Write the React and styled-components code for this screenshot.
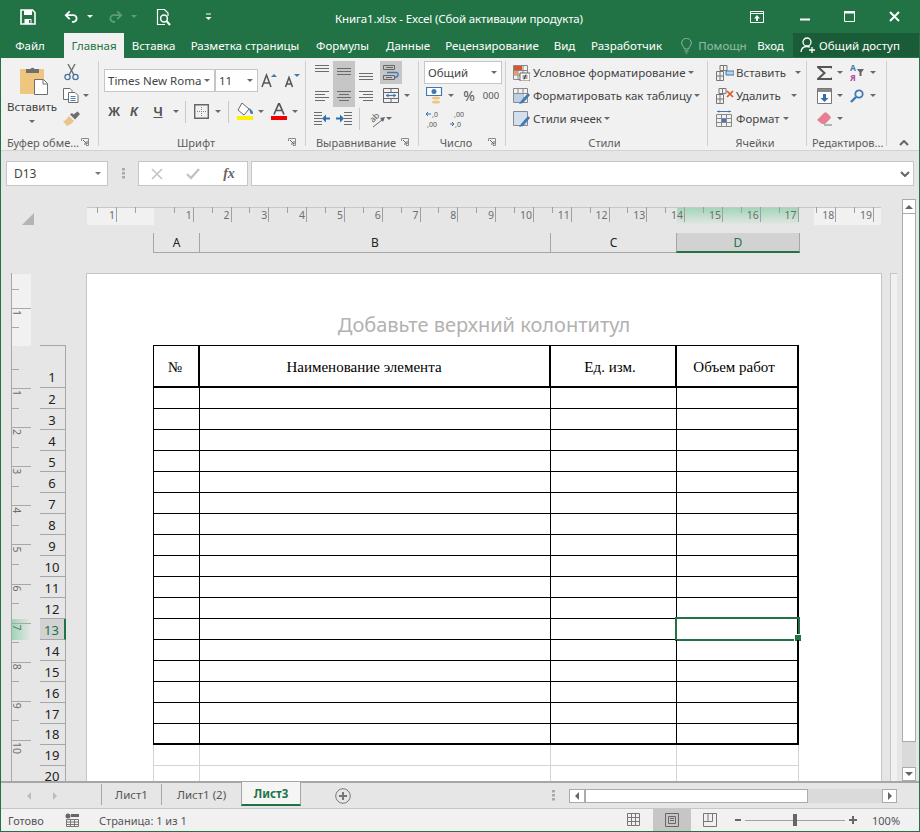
import React from 'react';
import styled, { createGlobalStyle } from 'styled-components';

const green = '#217346';

const GlobalStyle = createGlobalStyle`
  html, body { margin: 0; padding: 0; }
  body { font-family: "Noto Sans", "Liberation Sans", sans-serif; font-size: 12px; color: #444; }
  * { box-sizing: border-box; }
`;

const Window = styled.div`
  width: 920px;
  height: 832px;
  display: flex;
  flex-direction: column;
  border: 1px solid ${green};
  border-top: 0;
  overflow: hidden;
  background: #e6e6e6;
`;

/* title bar */
const TitleBar = styled.div`
  height: 33px;
  flex: none;
  display: flex;
  align-items: center;
  background: ${green};
  color: #fff;
`;
const Qat = styled.div`
  width: 334px;
  display: flex;
  align-items: center;
  padding-left: 19px;
`;
const QatSlot = styled.div`
  width: ${p => p.$w}px;
  display: flex;
  align-items: center;
`;
const Title = styled.div`
  flex: 1;
  font-size: 11.5px;
  letter-spacing: -0.15px;
  padding-top: 4px;
  white-space: nowrap;
`;
const WinControls = styled.div`
  display: flex;
  align-items: center;
  padding-right: 2px;
`;
const WinButton = styled.div`
  width: 45px;
  display: flex;
  justify-content: center;
  padding-right: ${p => p.$pr || 0}px;
`;

/* tabs */
const TabRow = styled.div`
  height: 25px;
  flex: none;
  display: flex;
  background: ${green};
  color: #fff;
`;
const Tab = styled.div`
  width: ${p => p.$w}px;
  flex: none;
  margin-left: ${p => p.$ml || 0}px;
  display: flex;
  align-items: center;
  justify-content: center;
  white-space: nowrap;
  font-size: 11.5px;
  background: ${p => (p.$active ? '#f1f1f1' : 'transparent')};
  color: ${p => (p.$active ? green : '#fff')};
  opacity: ${p => (p.$muted ? 0.5 : 1)};
`;
const Share = styled.div`
  width: 126px;
  flex: none;
  margin-left: 3px;
  height: 24px;
  display: flex;
  align-items: center;
  gap: 3px;
  padding-left: 7px;
  font-size: 11.5px;
  background: #1a5c38;
`;

/* ribbon */
const Ribbon = styled.div`
  height: 93px;
  flex: none;
  display: flex;
  background: #f1f1f1;
  border-bottom: 1px solid #d2d2d2;
  padding: 3px 0 4px;
`;
const Group = styled.div`
  width: ${p => p.$w}px;
  flex: none;
  display: flex;
  flex-direction: column;
  border-right: 1px solid #d0d0d0;
  margin-right: 1px;
`;
const GroupBody = styled.div`
  flex: 1;
  min-height: 0;
  display: flex;
  flex-direction: ${p => (p.$row ? 'row' : 'column')};
  padding-left: ${p => p.$pl || 0}px;
  padding-top: ${p => p.$pt || 0}px;
  gap: ${p => p.$gap || 0}px;
`;
const GroupFooter = styled.div`
  height: 18px;
  margin-bottom: -5px;
  flex: none;
  display: flex;
  align-items: center;
  padding: 0 9px 0 4px;
`;
const GroupLabel = styled.div`
  flex: 1;
  text-align: center;
  font-size: 11px;
  color: #5c5c5c;
  white-space: nowrap;
`;
const Row = styled.div`
  height: ${p => p.$h || 23}px;
  flex: none;
  display: flex;
  align-items: center;
  white-space: nowrap;
`;
const Slot = styled.div`
  width: ${p => p.$w}px;
  height: ${p => p.$h || 23}px;
  flex: none;
  display: flex;
  align-items: center;
  justify-content: center;
  margin-left: ${p => p.$ml || 0}px;
  background: ${p => (p.$active ? '#c6c6c6' : 'transparent')};
`;
const Caret = styled.span`
  flex: none;
  width: 0;
  height: 0;
  margin-left: ${p => p.$ml || 0}px;
  border-left: 3px solid transparent;
  border-right: 3px solid transparent;
  border-top: 3px solid ${p => p.$color || '#6a6a6a'};
`;
const Divider = styled.div`
  width: 1px;
  height: 22px;
  flex: none;
  margin: 0 ${p => p.$m || 6}px;
  background: #c8c8c8;
`;
const Paste = styled.div`
  width: 58px;
  flex: none;
  display: flex;
  flex-direction: column;
  align-items: center;
  padding: 5px 0 0 4px;
  font-size: 11.5px;
  color: #3f3f3f;
  svg { margin-left: 4px; }
`;
const PasteText = styled.div`
  margin: 3px 0 5px;
  line-height: 16px;
`;
const ClipColumn = styled.div`
  display: flex;
  flex-direction: column;
`;
const Select = styled.div`
  width: ${p => p.$w}px;
  height: 23px;
  flex: none;
  display: flex;
  align-items: center;
  justify-content: space-between;
  padding: 0 4px 0 3px;
  background: #fff;
  border: 1px solid #c6c6c6;
  color: #444;
  font-size: 11.5px;
  white-space: nowrap;
  overflow: hidden;
`;
const StyleText = styled.span`
  font-size: 11.5px;
  color: #444;
  margin-left: ${p => p.$ml || 3}px;
`;
const Percent = styled.span`
  font-size: 14px;
  color: #555;
`;
const Thousands = styled.span`
  font-size: 9.5px;
  color: #555;
`;
const StyleRow = styled(Row)`
  padding-left: ${p => p.$pl || 5}px;
`;
const Collapse = styled.div`
  width: 31px;
  flex: none;
  display: flex;
  align-items: flex-end;
  justify-content: center;
`;
const BoldGlyph = styled.span`
  font-family: "Liberation Sans", sans-serif;
  font-size: 13px;
  font-weight: 700;
  font-style: ${p => (p.$italic ? 'italic' : 'normal')};
  text-decoration: ${p => (p.$under ? 'underline' : 'none')};
  color: #555;
`;

/* formula bar */
const FormulaBar = styled.div`
  height: 35px;
  flex: none;
  display: flex;
  align-items: flex-end;
  padding: 0 5px;
`;
const NameBox = styled.div`
  width: 102px;
  height: 25px;
  display: flex;
  align-items: center;
  justify-content: space-between;
  padding: 0 6px 0 7px;
  background: #fff;
  border: 1px solid #c6c6c6;
  color: #444;
`;
const Grip = styled.div`
  width: 30px;
  height: 25px;
  display: flex;
  align-items: center;
  justify-content: center;
`;
const FxButtons = styled.div`
  width: 110px;
  height: 25px;
  display: grid;
  grid-template-columns: 36px 36px 36px;
  align-items: center;
  justify-items: center;
  background: #fff;
  border: 1px solid #c6c6c6;
`;
const FxGlyph = styled.span`
  font-family: "Liberation Serif", serif;
  font-style: italic;
  font-weight: 700;
  font-size: 14px;
  color: #666;
`;
const FxInput = styled.div`
  width: 663px;
  height: 25px;
  margin-left: 3px;
  display: flex;
  align-items: center;
  justify-content: flex-end;
  padding-right: 3px;
  background: #fff;
  border: 1px solid #c6c6c6;
`;

/* sheet */
const SheetArea = styled.div`
  flex: 1;
  min-height: 0;
  display: flex;
`;
const SheetMain = styled.div`
  width: 901px;
  flex: none;
  display: flex;
  flex-direction: column;
`;
const RulerRow = styled.div`
  margin-top: 21px;
  height: 18px;
  display: flex;
`;
const Corner = styled.div`
  width: 86px;
  height: 18px;
  flex: none;
  display: flex;
  align-items: flex-end;
  padding-left: 21px;
`;
const ColumnHeads = styled.div`
  margin-top: 8px;
  height: 20px;
  display: flex;
  padding-left: 152px;
`;
const ColumnHead = styled.div`
  width: ${p => p.$w}px;
  display: flex;
  align-items: center;
  justify-content: center;
  border-left: 1px solid #a6a6a6;
  border-bottom: ${p => (p.$active ? `2px solid ${green}` : '1px solid #a6a6a6')};
  border-right: ${p => (p.$active ? '1px solid #a6a6a6' : '0')};
  background: ${p => (p.$active ? '#d2d2d2' : 'transparent')};
  color: ${p => (p.$active ? green : '#222')};
  font-size: 12px;
`;
const PageRow = styled.div`
  flex: 1;
  min-height: 0;
  margin-top: 20px;
  padding-left: 10px;
  display: flex;
  overflow: hidden;
`;
const RowHeads = styled.div`
  width: 26px;
  margin-left: 9px;
  margin-right: 20px;
  padding-top: 72px;
  flex: none;
`;
const RowHead = styled.div`
  height: ${p => p.$h}px;
  display: flex;
  align-items: ${p => (p.$tall ? 'flex-end' : 'center')};
  justify-content: center;
  padding-top: ${p => (p.$tall || p.$n >= 18 ? 0 : 2)}px;
  padding-bottom: ${p => (p.$tall || p.$n === 20 ? 1 : 0)}px;
  padding-right: 1px;
  font-size: 13px;
  line-height: 18px;
  color: ${p => (p.$active ? green : '#222')};
  background: ${p => (p.$active ? '#d2d2d2' : 'transparent')};
  border-top: ${p => (p.$tall ? '1px solid #a6a6a6' : '0')};
  border-right: ${p => (p.$active ? `2px solid ${green}` : '1px solid #a6a6a6')};
  border-bottom: 1px solid #a6a6a6;
`;
const Page = styled.div`
  width: 796px;
  flex: none;
  background: #fff;
  border: 1px solid #c6c6c6;
  border-bottom: 0;
`;
const HeaderZone = styled.div`
  height: 71px;
  padding-top: 37px;
  text-align: center;
  font-size: 20px;
  line-height: 28px;
  color: #b2b2b2;
`;
const Sheet = styled.div`
  margin-left: 66px;
  width: 646px;
`;
const Rule = styled.div`
  height: 1px;
  background: #000;
`;
const TableRow = styled.div`
  height: ${p => p.$h}px;
  display: grid;
  grid-template-columns: 46px 351px 126px 122px;
  border-left: 1px solid ${p => p.$line};
`;
const Cell = styled.div`
  position: relative;
  display: flex;
  align-items: center;
  justify-content: center;
  padding: 3px ${p => p.$pr || 0}px 0 0;
  font-family: "Liberation Serif", serif;
  font-size: 15px;
  color: #000;
  border-right: ${p => p.$rw || 1}px solid ${p => p.$line};
  border-bottom: ${p => p.$bw || 1}px solid ${p => p.$line};
`;
const Selection = styled.div`
  position: absolute;
  top: -2px;
  left: -2px;
  right: -3px;
  bottom: -2px;
  border: 2px solid ${green};
`;
const FillHandle = styled.div`
  position: absolute;
  right: -3px;
  bottom: -3px;
  width: 6px;
  height: 6px;
  background: ${green};
  border: 1px solid #fff;
  border-right: 0;
  box-sizing: content-box;
`;
const NextPage = styled.div`
  width: 7px;
  margin-left: 8px;
  flex: none;
  background: #f1f1f1;
  border-left: 1px solid #c6c6c6;
  border-top: 1px solid #c6c6c6;
`;

/* scrollbars */
const VScroll = styled.div`
  width: 14px;
  flex: none;
  margin-top: 13px;
  display: flex;
  flex-direction: column;
  background: #dadada;
`;
const ScrollBtn = styled.div`
  width: ${p => p.$w || 14}px;
  height: ${p => p.$h || 14}px;
  flex: none;
  display: flex;
  align-items: center;
  justify-content: center;
  background: #fff;
  border: 1px solid #ababab;
`;
const VThumb = styled.div`
  height: 528px;
  flex: none;
  background: #fff;
  border: 1px solid #ababab;
  border-top: 0;
`;
const VTrack = styled.div`
  flex: 1;
`;
const HScroll = styled.div`
  width: 328px;
  height: 14px;
  display: flex;
  background: #dadada;
`;
const HThumb = styled.div`
  width: 223px;
  flex: none;
  background: #fff;
  border: 1px solid #ababab;
`;
const HTrack = styled.div`
  flex: 1;
`;

/* sheet tabs */
const TabBar = styled.div`
  height: 28px;
  flex: none;
  display: flex;
  align-items: stretch;
  border-top: 2px solid #a6a6a6;
  border-bottom: 1px solid #c6c6c6;
  background: #e6e6e6;
`;
const NavArrows = styled.div`
  width: 100px;
  flex: none;
  display: flex;
  align-items: center;
  padding-left: 26px;
  gap: 22px;
`;
const SheetTab = styled.div`
  width: ${p => p.$w}px;
  height: ${p => (p.$active ? '24px' : '21px')};
  flex: none;
  display: flex;
  align-items: center;
  justify-content: center;
  margin-top: ${p => (p.$active ? '-1px' : '1px')};
  font-size: 11.5px;
  color: ${p => (p.$active ? green : '#555')};
  font-weight: ${p => (p.$active ? 700 : 400)};
  background: ${p => (p.$active ? '#f5f5f5' : 'transparent')};
  border-left: 1px solid #a6a6a6;
  border-right: ${p => (p.$active ? '1px solid #a6a6a6' : '0')};
  border-bottom: ${p => (p.$active ? `2px solid ${green}` : '0')};
`;
const AddSheet = styled.div`
  width: 83px;
  flex: none;
  display: flex;
  align-items: center;
  padding-left: 34px;
`;
const TabGrip = styled.div`
  width: 185px;
  flex: none;
  display: flex;
  align-items: center;
  padding-left: 168px;
`;
const HScrollWrap = styled.div`
  display: flex;
  align-items: center;
`;

/* status bar */
const StatusBar = styled.div`
  height: 22px;
  flex: none;
  display: flex;
  align-items: center;
  background: #f1f1f1;
  color: #555;
  font-size: 11px;
`;
const StatusText = styled.div`
  width: ${p => p.$w}px;
  flex: none;
  padding-left: ${p => p.$pl || 0}px;
  white-space: nowrap;
`;
const ViewButton = styled.div`
  width: ${p => p.$w}px;
  height: 22px;
  flex: none;
  display: flex;
  align-items: center;
  justify-content: center;
  background: ${p => (p.$active ? '#c6c6c6' : 'transparent')};
`;
const ZoomBar = styled.div`
  margin-left: 6px;
  display: flex;
  align-items: center;
`;
const ZoomTrack = styled.div`
  width: 100px;
  height: 1px;
  margin: 0 4px;
  background: #a0a0a0;
  display: flex;
  justify-content: center;
  align-items: center;
`;
const ZoomThumb = styled.div`
  width: 4px;
  height: 12px;
  flex: none;
  background: #666;
`;
const ZoomPct = styled.div`
  margin-left: 15px;
  color: #555;
`;

/* icons */
const Svg = ({ w, h, children }) => (
  <svg width={w} height={h} viewBox={`0 0 ${w} ${h}`} fill="none">
    {children}
  </svg>
);

const SaveIcon = () => (
  <Svg w={16} h={16}>
    <path d="M1 1h11.500L15 3.500V15H1z" stroke="#fff" strokeWidth="1.600" />
    <path d="M4 1h8v5H4zM4.500 10h7v5h-7z" fill="#fff" />
    <path d="M9 11h1.500v3H9z" fill={green} />
  </Svg>
);
const UndoIcon = ({ color = '#fff', flip }) => (
  <svg width="15" height="14" viewBox="0 0 17 15" fill="none" style={flip ? { transform: 'scaleX(-1)' } : undefined}>
    <path d="M6.500 1 2 5.500 6.500 10" stroke={color} strokeWidth="2" />
    <path d="M3 5.500h7.500a3.800 3.800 0 0 1 0 7.600H9" stroke={color} strokeWidth="2" />
  </svg>
);
const PreviewIcon = () => (
  <Svg w={15} h={18}>
    <path d="M9 16.500H1.500v-15h7l3.500 3.500v3" stroke="#fff" strokeWidth="1.200" />
    <circle cx="8" cy="10.500" r="3.400" stroke="#fff" strokeWidth="1.500" />
    <path d="m10.500 13 3.500 4" stroke="#fff" strokeWidth="2" />
  </Svg>
);
const CustomizeIcon = () => (
  <Svg w={7} h={8}>
    <path d="M1 1h5" stroke="#fff" />
    <path d="M0.500 4h6L3.500 7z" fill="#fff" />
  </Svg>
);
const RibbonModeIcon = () => (
  <Svg w={14} h={12}>
    <path d="M.500.500h13v11H.500zM.500 2.500h13" stroke="#fff" />
    <path d="M7 4 4 7.500h2V10h2V7.500h2z" fill="#fff" />
  </Svg>
);
const MinIcon = () => (
  <Svg w={10} h={10}>
    <path d="M0 7.500h10" stroke="#fff" strokeWidth="2" />
  </Svg>
);
const MaxIcon = () => (
  <Svg w={11} h={11}>
    <path d="M.500 1.500h10v9H.500z" stroke="#fff" />
    <path d="M0 0h11v2.500H0z" fill="#fff" />
  </Svg>
);
const CloseIcon = () => (
  <Svg w={11} h={11}>
    <path d="m1 1 9 9M10 1l-9 9" stroke="#fff" strokeWidth="2" />
  </Svg>
);
const BulbIcon = () => (
  <Svg w={11} h={16}>
    <path d="M3.500 11C3 8.500.7 7.800.7 5a4.800 4.800 0 0 1 9.600 0c0 2.800-2.300 3.500-2.800 6z" stroke="#8db9a2" />
    <path d="M3.500 13h4M4.500 15h2" stroke="#8db9a2" />
  </Svg>
);
const PersonIcon = () => (
  <Svg w={16} h={16}>
    <circle cx="7" cy="5" r="4" stroke="#fff" strokeWidth="1.300" />
    <path d="M1 15c.3-3.500 2.500-5.500 6-5.500 1 0 2 .2 2.800.6" stroke="#fff" strokeWidth="1.300" />
    <path d="M12 10v6M9 13h6" stroke="#fff" strokeWidth="1.300" />
  </Svg>
);
const PasteIcon = () => (
  <Svg w={29} h={30}>
    <rect x="0" y="3" width="24" height="25" rx="1" fill="#eec680" />
    <path d="M6 7V3h4.500a2.300 2.300 0 0 1 4 0H19v4z" fill="#6f6f6f" />
    <path d="M14.500 13.500h9l4 4v11h-13z" fill="#fff" stroke="#6f6f6f" />
    <path d="M23 13.500v4.500h4.500" stroke="#6f6f6f" />
  </Svg>
);
const CutIcon = () => (
  <Svg w={15} h={17}>
    <path d="M4 0l6 11M11 0 5 11" stroke="#6e6e6e" strokeWidth="1.400" />
    <circle cx="3.500" cy="13" r="2.600" stroke="#44739e" strokeWidth="1.300" />
    <circle cx="11.500" cy="13" r="2.600" stroke="#44739e" strokeWidth="1.300" />
  </Svg>
);
const CopyIcon = () => (
  <Svg w={16} h={15}>
    <path d="M.500.500H7l2 2v9H.500z" fill="#fff" stroke="#6e6e6e" />
    <path d="M5.500 4.500H12l3 3v7H5.500z" fill="#fff" stroke="#6e6e6e" />
    <path d="M7.500 8.500h5M7.500 10.500h5M7.500 12.500h5" stroke="#4a7fb0" />
  </Svg>
);
const BrushIcon = () => (
  <Svg w={17} h={15}>
    <path d="M0 10c3 0 4-3 6-5l5 5c-2 2-4 4-7 5z" fill="#e7c48b" />
    <path d="m7 3.500 5 5 1.500-1.500L17 3l-2.500-2.500-4 3L9 2z" fill="#6e6e6e" />
  </Svg>
);
const Launcher = () => (
  <Svg w={8} h={8}>
    <path d="M.500 3V.500H7.500V7.500H5" stroke="#8a8a8a" />
    <path d="m2 2 4 4M6 3v3H3" stroke="#6a6a6a" />
  </Svg>
);
const GrowFont = ({ down }) => (
  <Svg w={16} h={15}>
    <path d={down ? 'M1.500 14 5 4.500 8.500 14M3 11h4' : 'M1 14 5.500 2 10 14M3 10h5'} stroke="#555" strokeWidth="1.500" />
    <path d={down ? 'M10 1h6l-3 3z' : 'M10 4l3-3 3 3z'} fill="#3e79b4" />
  </Svg>
);
const BordersIcon = () => (
  <Svg w={15} h={15}>
    <path d="M.700.700h13.600v13.600H.700z" stroke="#666" strokeWidth="1.400" />
    <path d="M7.500 3v9M3 7.500h9" stroke="#888" strokeDasharray="1 1" />
  </Svg>
);
const FillIcon = () => (
  <Svg w={18} h={18}>
    <path d="m6 0 7 6-5 6-6-5z" fill="#fff" stroke="#666" />
    <path d="M13 5c2 1 4 3 4 5s-3 1-3-1z" fill="#3e79b4" />
    <path d="M1 13h16v4H1z" fill="#ffef00" />
  </Svg>
);
const FontColorIcon = () => (
  <Svg w={16} h={18}>
    <path d="M3 11.500 8 0l5 11.500M5 7.500h6" stroke="#555" strokeWidth="1.700" />
    <path d="M0 13h16v4H0z" fill="#f00000" />
  </Svg>
);
const Lines = ({ rows, color = '#6b6b6b' }) => (
  <Svg w={15} h={15}>
    {rows.map(([x1, x2, y]) => (
      <path key={y} d={`M${x1} ${y + 0.5}H${x2}`} stroke={color} />
    ))}
  </Svg>
);
const WrapIcon = () => (
  <Svg w={17} h={16}>
    <path d="M.500.500h11v4H.500zM.500 10.500h11v4H.500z" stroke="#666" />
    <path d="M3 2.500h7M3 12.500h6" stroke="#666" />
    <path d="M4 7.500h9c3 0 3 4-1 5" stroke="#3e79b4" strokeWidth="1.300" />
  </Svg>
);
const MergeIcon = () => (
  <Svg w={16} h={15}>
    <path d="M.500.500h15v14H.500zM.500 4.500h15M.500 10.500h15M8 .500v4M8 10.500v4" stroke="#666" />
    <path d="M3 7.500h10" stroke="#3e79b4" strokeWidth="1.200" />
    <path d="M5.500 5.500 3 7.500l2.500 2zM10.500 5.500l2.500 2-2.500 2z" fill="#3e79b4" />
  </Svg>
);
const IndentIcon = ({ flip }) => (
  <svg width="16" height="13" viewBox="0 0 16 13" fill="none" style={flip ? { transform: 'scaleX(-1)' } : undefined}>
    <path d="M8 .500h8M8 3.500h8M8 6.500h8M8 9.500h8M8 12.500h8" stroke="#6b6b6b" />
    <path d="M0 6.500h5" stroke="#2f6fb0" strokeWidth="2" />
    <path d="m4 2.500 4 4-4 4z" fill="#2f6fb0" />
  </svg>
);
const OrientIcon = () => (
  <Svg w={21} h={21}>
    <text x="8" y="15" fontSize="8.500" fontFamily="Noto Sans, sans-serif" fill="#555" transform="rotate(-45 8 15)">ab</text>
    <path d="m8 19 9-7" stroke="#666" />
    <path d="m20 9-5 1 3 4z" fill="#666" />
  </Svg>
);
const CurrencyIcon = () => (
  <Svg w={17} h={17}>
    <path d="M.500.500h15v8H.500z" fill="#fff" stroke="#3e79b4" strokeWidth="1.200" />
    <circle cx="8" cy="4.500" r="2.500" fill="#3e79b4" />
    <ellipse cx="10" cy="11" rx="4" ry="1.500" fill="#eec680" />
    <ellipse cx="10" cy="15" rx="4" ry="1.500" fill="#eec680" />
  </Svg>
);
const DecimalIcon = ({ more }) => (
  <Svg w={17} h={20}>
    <text x={more ? 6 : 4} y="8" fontSize="7" fontFamily="Noto Sans, sans-serif" fill="#555">{more ? ',0' : ',00'}</text>
    <text x={more ? 1 : 5} y="18" fontSize="7" fontFamily="Noto Sans, sans-serif" fill="#555">{more ? ',00' : ',0'}</text>
    <path d={more ? 'M0 5h5M2 3 0 5l2 2' : 'M0 15h4M2 13l2 2-2 2'} stroke="#2f6fb0" />
  </Svg>
);
const TableIcon = ({ head, children }) => (
  <Svg w={17} h={16}>
    <path d="M.500.500h14v14H.500zM.500 5.500h14M.500 10h14M5 .500v14M10 .500v14" stroke="#8a8a8a" />
    {head && <path d="M1 1h8v4H1z" fill={head} />}
    {children}
  </Svg>
);
const CondIcon = () => (
  <TableIcon head="#d9552a">
    <path d="M1 6h4v4H1z" fill="#ee9a6e" />
    <path d="M7 8h10v8H7z" fill="#fff" stroke="#666" />
    <path d="M9.500 11h5M9.500 13h5M13 9.500l-2 5" stroke="#444" />
  </TableIcon>
);
const FormatTableIcon = () => (
  <TableIcon>
    <path d="M1 6h9v8H1z" fill="#bcd0e6" />
    <path d="m8 13 7-8 2 2-7 8-4 1z" fill="#3e79b4" />
  </TableIcon>
);
const CellStylesIcon = () => (
  <TableIcon>
    <path d="M1 1h13v13H1z" fill="#d3dfec" />
    <path d="m8 13 7-8 2 2-7 8-4 1z" fill="#3e79b4" />
  </TableIcon>
);
const InsertCellsIcon = () => (
  <Svg w={18} h={16}>
    <path d="M.500 6.500h7v9h-7zM4 6.500v9M.500 11h7M4 .500h7v5H4zM7.500.500v5" stroke="#777" />
    <path d="M10 6h8v4h-8z" fill="#bcd0e6" stroke="#3e79b4" />
  </Svg>
);
const DeleteCellsIcon = () => (
  <Svg w={18} h={16}>
    <path d="M.500 6.500h7v9h-7zM4 6.500v9M.500 11h7M3 .500h7v5H3zM6.500.500v5" stroke="#777" />
    <path d="m11 3 6 6M17 3l-6 6" stroke="#d9552a" strokeWidth="1.700" />
  </Svg>
);
const FormatCellsIcon = () => (
  <Svg w={17} h={17}>
    <path d="M1 1.500h14M3 .500v2M13 .500v2" stroke="#3e79b4" />
    <path d="M.500 4.500h15v12H.500zM.500 8.500h15M.500 12.500h15M5.500 4.500v12M10.500 4.500v12" stroke="#8a8a8a" />
    <path d="M6 9h4v3H6z" fill="#3e79b4" />
  </Svg>
);
const SigmaIcon = () => (
  <Svg w={15} h={14}>
    <path d="M15 2.500V1H1l6.500 6L1 13h14v-1.500" stroke="#555" strokeWidth="2" />
  </Svg>
);
const SortIcon = () => (
  <Svg w={14} h={19}>
    <text x="0" y="8" fontSize="8.500" fontWeight="700" fontFamily="Noto Sans, sans-serif" fill="#3e79b4">А</text>
    <text x="0" y="18" fontSize="8.500" fontWeight="700" fontFamily="Noto Sans, sans-serif" fill="#b04fa0">Я</text>
    <path d="M7 6h7l-2.500 3.500V13h-2V9.500z" fill="#666" />
  </Svg>
);
const FillDownIcon = () => (
  <Svg w={15} h={16}>
    <path d="M.500.500h14v15H.500z" fill="#fff" stroke="#777" />
    <path d="M1 1h13v3H1z" fill="#888" />
    <path d="M6 6h3v4h2.500l-4 4-4-4H6z" fill="#2f6fb0" />
  </Svg>
);
const FindIcon = () => (
  <Svg w={14} h={14}>
    <circle cx="9" cy="5" r="3.700" stroke="#3e79b4" strokeWidth="1.800" />
    <path d="m6 8-5 5" stroke="#3e79b4" strokeWidth="2.400" />
  </Svg>
);
const EraserIcon = () => (
  <Svg w={15} h={14}>
    <path d="M0 8 7 1c1-1 2-1 3 0l3 3c1 1 1 2 0 3l-5 5H5z" fill="#e77f93" />
    <path d="M7 13h8" stroke="#777" />
  </Svg>
);
const ChevronUp = () => (
  <Svg w={10} h={6}>
    <path d="m1 5 4-4 4 4" stroke="#666" strokeWidth="2" />
  </Svg>
);
const ChevronDown = () => (
  <Svg w={10} h={6}>
    <path d="m1 1 4 4 4-4" stroke="#666" strokeWidth="2" />
  </Svg>
);
const GripDots = () => (
  <Svg w={3} h={11}>
    <path d="M0 0h3v2.500H0zM0 4h3v2.500H0zM0 8h3v2.500H0z" fill="#aaa" />
  </Svg>
);
const CrossIcon = () => (
  <Svg w={12} h={12}>
    <path d="m1 1 10 10M11 1 1 11" stroke="#c4c4c4" strokeWidth="1.600" />
  </Svg>
);
const CheckIcon = () => (
  <Svg w={14} h={12}>
    <path d="m1 6 4 4 8-9" stroke="#c4c4c4" strokeWidth="2.400" />
  </Svg>
);
const CornerIcon = () => (
  <Svg w={12} h={12}>
    <path d="M12 0v12H0z" fill="#b4b4b4" />
  </Svg>
);
const Arrow = ({ dir, color = '#666', size = 4 }) => {
  const paths = {
    up: `M0 ${size}L${size} 0l${size} ${size}z`,
    down: `M0 0h${size * 2}L${size} ${size}z`,
    left: `M${size} 0v${size * 2}L0 ${size}z`,
    right: `M0 0v${size * 2}L${size} ${size}z`,
  };
  const vert = dir === 'up' || dir === 'down';
  const w = vert ? size * 2 : size;
  const h = vert ? size : size * 2;
  return (
    <Svg w={w} h={h}>
      <path d={paths[dir]} fill={color} />
    </Svg>
  );
};
const PlusCircle = () => (
  <Svg w={16} h={16}>
    <circle cx="8" cy="8" r="7.300" stroke="#777" />
    <path d="M8 4v8M4 8h8" stroke="#777" strokeWidth="2" />
  </Svg>
);
const MacroIcon = () => (
  <Svg w={14} h={14}>
    <circle cx="3" cy="3" r="2.500" fill="#666" />
    <path d="M6 1h8v3H6z" fill="#666" />
    <path d="M1.500 6.500h12v7h-12zM5.500 6.500v7M9.500 6.500v7M1.500 9h12M1.500 11.500h12" stroke="#777" />
  </Svg>
);
const NormalViewIcon = () => (
  <Svg w={14} h={14}>
    <path d="M.500.500h12v12H.500zM4.500.500v12M8.500.500v12M.500 4.500h12M.500 8.500h12" stroke="#777" />
  </Svg>
);
const LayoutViewIcon = () => (
  <Svg w={14} h={14}>
    <path d="M.500.500h13v13H.500z" stroke="#666" />
    <path d="M3.500 3.500h7v7h-7zM5 5.500h4M5 7.500h4" stroke="#666" />
  </Svg>
);
const BreakViewIcon = () => (
  <Svg w={14} h={14}>
    <path d="M.500.500h13v13H.500zM.500 8.500h9v-8M5 .500v8" stroke="#777" />
  </Svg>
);
const ZoomMinus = () => (
  <Svg w={6} h={2}>
    <path d="M0 0h6v2H0z" fill="#666" />
  </Svg>
);
const ZoomPlus = () => (
  <Svg w={8} h={8}>
    <path d="M3 0h2v3h3v2H5v3H3V5H0V3h3z" fill="#666" />
  </Svg>
);

/* rulers */
const rulerText = { fontFamily: 'Noto Sans, sans-serif', fontSize: 10.5, fill: '#6e6e6e' };

const TopRuler = () => {
  const ticks = Array.from({ length: 19 }, (_, i) => 105.7 + 37.8 * i);
  return (
    <svg width="795" height="18" viewBox="0 0 795 18">
      <defs>
        <linearGradient id="rulerGreen" x1="0" x2="0" y1="0" y2="1">
          <stop offset="0" stopColor="#9fd5b6" />
          <stop offset="1" stopColor="#9fd5b6" stopOpacity="0" />
        </linearGradient>
      </defs>
      <rect x="0" y="0" width="67" height="18" fill="#f1f1f1" />
      <rect x="727" y="0" width="67" height="18" fill="#f1f1f1" />
      <rect x="590" y="0" width="122" height="18" fill="url(#rulerGreen)" />
      <path d="M0 .500h794" stroke="#c8c8c8" />
      <path d="M29.500 0v15M10.500 0v6M48.500 0v6" stroke="#a0a0a0" />
      <text x="28" y="12" textAnchor="end" {...rulerText}>1</text>
      {ticks.map((t, i) => (
        <g key={t}>
          <path d={`M${Math.round(t) + 0.5} 0v15M${Math.round(t - 18.9) + 0.5} 0v6`} stroke="#a0a0a0" />
          <text x={t - 1} y="12" textAnchor="end" {...rulerText}>{i + 1}</text>
        </g>
      ))}
    </svg>
  );
};

const SideRuler = () => {
  const ticks = Array.from({ length: 10 }, (_, i) => 115 + 39.1 * i);
  return (
    <svg width="20" height="508" viewBox="0 0 20 508" style={{ flex: 'none' }}>
      <defs>
        <linearGradient id="sideGreen" x1="0" x2="1" y1="0" y2="0">
          <stop offset="0" stopColor="#9fd5b6" />
          <stop offset="1" stopColor="#9fd5b6" stopOpacity="0" />
        </linearGradient>
      </defs>
      <rect x="1" y="1" width="19" height="72" fill="#f1f1f1" />
      <rect x="1" y="346" width="19" height="21" fill="url(#sideGreen)" />
      <path d="M.500 0v508" stroke="#a8a8a8" />
      <path d="M0 35.500h20M0 16.500h8M0 54.500h8" stroke="#a8a8a8" />
      <text transform="translate(2 37) rotate(90)" {...rulerText}>1</text>
      {ticks.map((t, i) => (
        <g key={t}>
          <path d={`M0 ${Math.round(t) + 0.5}h20M0 ${Math.round(t - 19.5) + 0.5}h8`} stroke="#a8a8a8" />
          <text transform={`translate(2 ${t + 2}) rotate(90)`} {...rulerText}>{i + 1}</text>
        </g>
      ))}
    </svg>
  );
};

const dataRows = Array.from({ length: 17 }, (_, i) => i + 2);
const rowNumbers = Array.from({ length: 20 }, (_, i) => i + 1);

const App = () => (
  <Window>
    <GlobalStyle />
    <TitleBar>
      <Qat>
        <QatSlot $w={44}><SaveIcon /></QatSlot>
        <QatSlot $w={44}><UndoIcon /><Caret $color="#fff" $ml={8} /></QatSlot>
        <QatSlot $w={48}><UndoIcon flip color="#5f9c7b" /><Caret $color="#5f9c7b" $ml={8} /></QatSlot>
        <QatSlot $w={49}><PreviewIcon /></QatSlot>
        <QatSlot $w={20}><CustomizeIcon /></QatSlot>
      </Qat>
      <Title>Книга1.xlsx - Excel (Сбой активации продукта)</Title>
      <WinControls>
        <WinButton $pr={5}><RibbonModeIcon /></WinButton>
        <WinButton><MinIcon /></WinButton>
        <WinButton><MaxIcon /></WinButton>
        <WinButton><CloseIcon /></WinButton>
      </WinControls>
    </TitleBar>

    <TabRow>
      <Tab $w={58}>Файл</Tab>
      <Tab $w={60} $ml={5} $active>Главная</Tab>
      <Tab $w={59}>Вставка</Tab>
      <Tab $w={124}>Разметка страницы</Tab>
      <Tab $w={71}>Формулы</Tab>
      <Tab $w={60}>Данные</Tab>
      <Tab $w={108}>Рецензирование</Tab>
      <Tab $w={37}>Вид</Tab>
      <Tab $w={87}>Разработчик</Tab>
      <Tab $w={16} $ml={8}><BulbIcon /></Tab>
      <Tab $w={57} $muted>Помощн</Tab>
      <Tab $w={39}>Вход</Tab>
      <Share><PersonIcon />Общий доступ</Share>
    </TabRow>

    <Ribbon>
      <Group $w={98}>
        <GroupBody $row>
          <Paste>
            <PasteIcon />
            <PasteText>Вставить</PasteText>
            <Caret />
          </Paste>
          <ClipColumn>
            <Row><Slot $w={24}><CutIcon /></Slot></Row>
            <Row><Slot $w={24}><CopyIcon /></Slot><Caret /></Row>
            <Row><Slot $w={24}><BrushIcon /></Slot></Row>
          </ClipColumn>
        </GroupBody>
        <GroupFooter>
          <GroupLabel>Буфер обме...</GroupLabel>
          <Launcher />
        </GroupFooter>
      </Group>

      <Group $w={206}>
        <GroupBody $pl={4} $pt={8} $gap={8}>
          <Row>
            <Select $w={111}>Times New Roma<Caret /></Select>
            <Select $w={43}>11<Caret /></Select>
            <Slot $w={22}><GrowFont /></Slot>
            <Slot $w={23}><GrowFont down /></Slot>
          </Row>
          <Row>
            <Slot $w={20} $h={22}><BoldGlyph>Ж</BoldGlyph></Slot>
            <Slot $w={20} $h={22}><BoldGlyph $italic>К</BoldGlyph></Slot>
            <Slot $w={28} $h={22}><BoldGlyph $under>Ч</BoldGlyph></Slot>
            <Caret $ml={1} />
            <Divider $m={6} />
            <Slot $w={18} $h={22}><BordersIcon /></Slot>
            <Caret $ml={5} />
            <Divider $m={7} />
            <Slot $w={18} $h={22}><FillIcon /></Slot>
            <Caret $ml={4} />
            <Slot $w={26} $h={22} $ml={2}><FontColorIcon /></Slot>
            <Caret />
          </Row>
        </GroupBody>
        <GroupFooter>
          <GroupLabel>Шрифт</GroupLabel>
          <Launcher />
        </GroupFooter>
      </Group>

      <Group $w={112}>
        <GroupBody $pl={4}>
          <Row>
            <Slot $w={22}><Lines rows={[[0, 14, 0], [0, 14, 3], [0, 14, 6]]} /></Slot>
            <Slot $w={22} $active><Lines rows={[[0, 14, 3], [0, 14, 6], [0, 14, 9]]} /></Slot>
            <Slot $w={22}><Lines rows={[[0, 14, 8], [0, 14, 11], [0, 14, 14]]} /></Slot>
            <Slot $w={22} $ml={3} $active><WrapIcon /></Slot>
          </Row>
          <Row>
            <Slot $w={22}><Lines rows={[[0, 14, 3], [0, 10, 6], [0, 14, 9], [0, 10, 12]]} /></Slot>
            <Slot $w={22} $active><Lines rows={[[0, 14, 3], [2, 12, 6], [0, 14, 9], [2, 12, 12]]} /></Slot>
            <Slot $w={22}><Lines rows={[[0, 14, 3], [4, 14, 6], [0, 14, 9], [4, 14, 12]]} /></Slot>
            <Slot $w={22} $ml={3}><MergeIcon /></Slot>
            <Caret $ml={2} />
          </Row>
          <Row>
            <Slot $w={22}><IndentIcon flip /></Slot>
            <Slot $w={22}><IndentIcon /></Slot>
            <Divider $m={4} />
            <Slot $w={22}><OrientIcon /></Slot>
            <Caret />
          </Row>
        </GroupBody>
        <GroupFooter>
          <GroupLabel>Выравнивание</GroupLabel>
          <Launcher />
        </GroupFooter>
      </Group>

      <Group $w={86}>
        <GroupBody $pl={4}>
          <Select $w={78}>Общий<Caret /></Select>
          <Row>
            <Slot $w={20}><CurrencyIcon /></Slot>
            <Caret $ml={4} />
            <Slot $w={30}><Percent>%</Percent></Slot>
            <Slot $w={14}><Thousands>000</Thousands></Slot>
          </Row>
          <Row>
            <Slot $w={20}><DecimalIcon more /></Slot>
            <Slot $w={28}><DecimalIcon /></Slot>
          </Row>
        </GroupBody>
        <GroupFooter>
          <GroupLabel>Число</GroupLabel>
          <Launcher />
        </GroupFooter>
      </Group>

      <Group $w={201}>
        <GroupBody>
          <StyleRow $pl={6}><CondIcon /><StyleText>Условное форматирование</StyleText><Caret $ml={2} /></StyleRow>
          <StyleRow $pl={6}><FormatTableIcon /><StyleText>Форматировать как таблицу</StyleText><Caret $ml={2} /></StyleRow>
          <StyleRow $pl={6}><CellStylesIcon /><StyleText>Стили ячеек</StyleText><Caret $ml={2} /></StyleRow>
        </GroupBody>
        <GroupFooter>
          <GroupLabel>Стили</GroupLabel>
        </GroupFooter>
      </Group>

      <Group $w={98}>
        <GroupBody>
          <StyleRow $pl={7}><InsertCellsIcon /><StyleText $ml={2}>Вставить</StyleText><Caret $ml={9} /></StyleRow>
          <StyleRow $pl={7}><DeleteCellsIcon /><StyleText $ml={2}>Удалить</StyleText><Caret $ml={10} /></StyleRow>
          <StyleRow $pl={7}><FormatCellsIcon /><StyleText>Формат</StyleText><Caret $ml={3} /></StyleRow>
        </GroupBody>
        <GroupFooter>
          <GroupLabel>Ячейки</GroupLabel>
        </GroupFooter>
      </Group>

      <Group $w={79}>
        <GroupBody $pl={3}>
          <Row>
            <Slot $w={26}><SigmaIcon /></Slot><Caret />
            <Slot $w={27}><SortIcon /></Slot><Caret />
          </Row>
          <Row>
            <Slot $w={26}><FillDownIcon /></Slot><Caret />
            <Slot $w={27}><FindIcon /></Slot><Caret />
          </Row>
          <Row>
            <Slot $w={26}><EraserIcon /></Slot><Caret />
          </Row>
        </GroupBody>
        <GroupFooter>
          <GroupLabel>Редактиров...</GroupLabel>
        </GroupFooter>
      </Group>

      <Collapse><ChevronUp /></Collapse>
    </Ribbon>

    <FormulaBar>
      <NameBox>D13<Caret $color="#777" /></NameBox>
      <Grip><GripDots /></Grip>
      <FxButtons>
        <CrossIcon />
        <CheckIcon />
        <FxGlyph>fx</FxGlyph>
      </FxButtons>
      <FxInput><ChevronDown /></FxInput>
    </FormulaBar>

    <SheetArea>
      <SheetMain>
        <RulerRow>
          <Corner><CornerIcon /></Corner>
          <TopRuler />
        </RulerRow>
        <ColumnHeads>
          <ColumnHead $w={46}>A</ColumnHead>
          <ColumnHead $w={351}>B</ColumnHead>
          <ColumnHead $w={126}>C</ColumnHead>
          <ColumnHead $w={124} $active>D</ColumnHead>
        </ColumnHeads>
        <PageRow>
          <SideRuler />
          <RowHeads>
            {rowNumbers.map(n => (
              <RowHead key={n} $n={n} $h={n === 1 ? 43 : 21} $tall={n === 1} $active={n === 13}>{n}</RowHead>
            ))}
          </RowHeads>
          <Page>
            <HeaderZone>Добавьте верхний колонтитул</HeaderZone>
            <Sheet>
              <Rule />
              <TableRow $h={42} $line="#000">
                <Cell $line="#000" $rw={2} $bw={2} $pr={2}>№</Cell>
                <Cell $line="#000" $rw={2} $bw={2} $pr={21}>Наименование элемента</Cell>
                <Cell $line="#000" $rw={2} $bw={2} $pr={6}>Ед. изм.</Cell>
                <Cell $line="#000" $rw={2} $bw={2} $pr={6}>Объем работ</Cell>
              </TableRow>
              {dataRows.map(n => {
                const bw = n === 18 ? 2 : 1;
                return (
                  <TableRow key={n} $h={21} $line="#000">
                    <Cell $line="#000" $bw={bw} />
                    <Cell $line="#000" $bw={bw} />
                    <Cell $line="#000" $bw={bw} />
                    <Cell $line="#000" $rw={2} $bw={bw}>
                      {n === 13 && (
                        <Selection>
                          <FillHandle />
                        </Selection>
                      )}
                    </Cell>
                  </TableRow>
                );
              })}
              {[19, 20].map(n => (
                <TableRow key={n} $h={21} $line="#d4d4d4">
                  <Cell $line="#d4d4d4" />
                  <Cell $line="#d4d4d4" />
                  <Cell $line="#d4d4d4" />
                  <Cell $line="#d4d4d4" />
                </TableRow>
              ))}
            </Sheet>
          </Page>
          <NextPage />
        </PageRow>
      </SheetMain>
      <VScroll>
        <ScrollBtn $h={15}><Arrow dir="up" /></ScrollBtn>
        <VThumb />
        <VTrack />
        <ScrollBtn><Arrow dir="down" /></ScrollBtn>
      </VScroll>
    </SheetArea>

    <TabBar>
      <NavArrows>
        <Arrow dir="left" color="#bdbdbd" />
        <Arrow dir="right" color="#bdbdbd" />
      </NavArrows>
      <SheetTab $w={60}>Лист1</SheetTab>
      <SheetTab $w={80}>Лист1 (2)</SheetTab>
      <SheetTab $w={60} $active>Лист3</SheetTab>
      <AddSheet><PlusCircle /></AddSheet>
      <TabGrip><GripDots /></TabGrip>
      <HScrollWrap>
        <HScroll>
          <ScrollBtn $w={16}><Arrow dir="left" /></ScrollBtn>
          <HThumb />
          <HTrack />
          <ScrollBtn $w={15}><Arrow dir="right" /></ScrollBtn>
        </HScroll>
      </HScrollWrap>
    </TabBar>

    <StatusBar>
      <StatusText $w={64} $pl={7}>Готово</StatusText>
      <MacroIcon />
      <StatusText $w={536} $pl={20}>Страница: 1 из 1</StatusText>
      <ViewButton $w={38}><NormalViewIcon /></ViewButton>
      <ViewButton $w={38} $active><LayoutViewIcon /></ViewButton>
      <ViewButton $w={38}><BreakViewIcon /></ViewButton>
      <ZoomBar>
        <ZoomMinus />
        <ZoomTrack><ZoomThumb /></ZoomTrack>
        <ZoomPlus />
      </ZoomBar>
      <ZoomPct>100%</ZoomPct>
    </StatusBar>
  </Window>
);

export default App;
